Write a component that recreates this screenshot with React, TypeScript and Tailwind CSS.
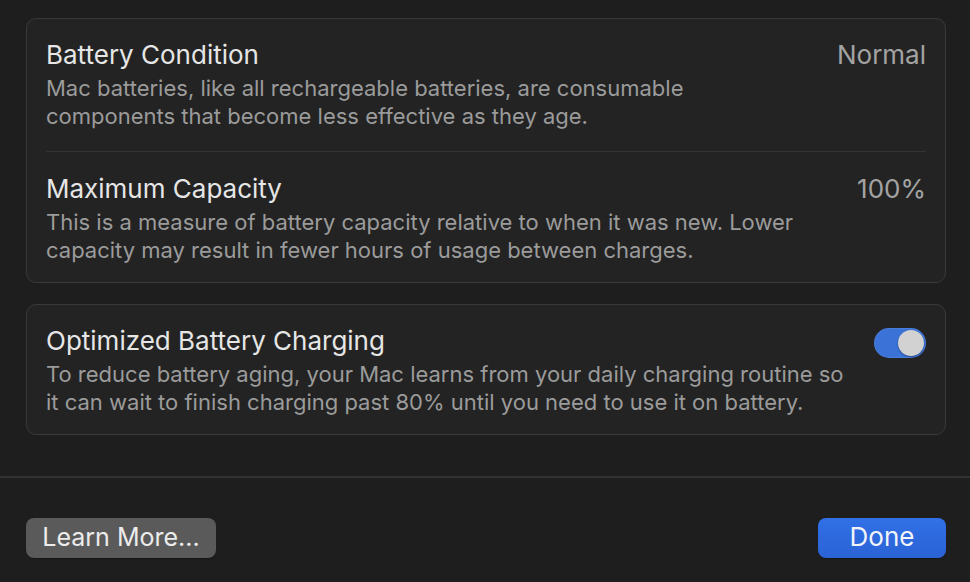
import React from "react";

function Toggle() {
  return (
    <div className="relative h-[30px] w-[52px] shrink-0 rounded-full bg-[#3a72d8] shadow-[inset_0_0_0_1px_rgba(255,255,255,0.08)]">
      <div className="absolute right-[2px] top-[2px] h-[26px] w-[26px] rounded-full bg-[#d2d2d2] shadow-[0_1px_2px_rgba(0,0,0,0.35)]" />
    </div>
  );
}

export default function App() {
  return (
    <div
      className="flex h-[582px] w-[970px] flex-col bg-[#1e1e1e] text-[#e6e6e6] antialiased"
      style={{ fontFamily: "Inter, 'Noto Sans', sans-serif" }}
    >
      <div className="flex flex-col gap-[21px] pl-[26px] pr-[24px] pt-[18px]">
        <div className="rounded-[10px] border border-[#393939] bg-[#232323] px-[19px]">
          <div className="pb-[21px] pt-[20px]">
            <div className="flex items-center justify-between text-[26px] leading-[32px]">
              <span className="text-[#e6e6e6]">Battery Condition</span>
              <span className="text-[#a3a3a3]">Normal</span>
            </div>
            <p className="mt-[3px] text-[22px] leading-[28px] text-[#9b9b9b]">
              Mac batteries, like all rechargeable batteries, are consumable
              <br />
              components that become less effective as they age.
            </p>
          </div>
          <div className="h-px bg-[#343434]" />
          <div className="pb-[18px] pt-[21px]">
            <div className="flex items-center justify-between text-[26px] leading-[32px]">
              <span className="text-[#e6e6e6]">Maximum Capacity</span>
              <span className="text-[#a3a3a3]">100%</span>
            </div>
            <p className="mt-[3px] text-[22px] leading-[28px] text-[#9b9b9b]">
              This is a measure of battery capacity relative to when it was new. Lower
              <br />
              capacity may result in fewer hours of usage between charges.
            </p>
          </div>
        </div>

        <div className="rounded-[10px] border border-[#393939] bg-[#232323] px-[19px] pb-[18px] pt-[20px]">
          <div className="flex items-start justify-between">
            <div>
              <div className="text-[26px] leading-[32px] text-[#e6e6e6]">
                Optimized Battery Charging
              </div>
              <p className="mt-[3px] text-[22px] leading-[28px] text-[#9b9b9b]">
                To reduce battery aging, your Mac learns from your daily charging routine so
                <br />
                it can wait to finish charging past 80% until you need to use it on battery.
              </p>
            </div>
            <div className="pt-[3px]">
              <Toggle />
            </div>
          </div>
        </div>
      </div>

      <div className="mt-[41px] h-[2px] bg-[#323232]" />

      <div className="flex items-center justify-between pl-[26px] pr-[24px] pt-[40px]">
        <button className="flex h-[40px] w-[190px] items-center justify-center rounded-[8px] bg-[#5a5a5a] pb-[2px] text-[25px] leading-none text-[#ececec] shadow-[0_1px_1px_rgba(0,0,0,0.3)]">
          Learn More...
        </button>
        <button className="flex h-[40px] w-[128px] items-center justify-center rounded-[8px] bg-gradient-to-b from-[#3170e6] to-[#2a63d6] pb-[2px] text-[26px] leading-none text-[#f2f4fa] shadow-[0_1px_1px_rgba(0,0,0,0.3)]">
          Done
        </button>
      </div>
    </div>
  );
}
